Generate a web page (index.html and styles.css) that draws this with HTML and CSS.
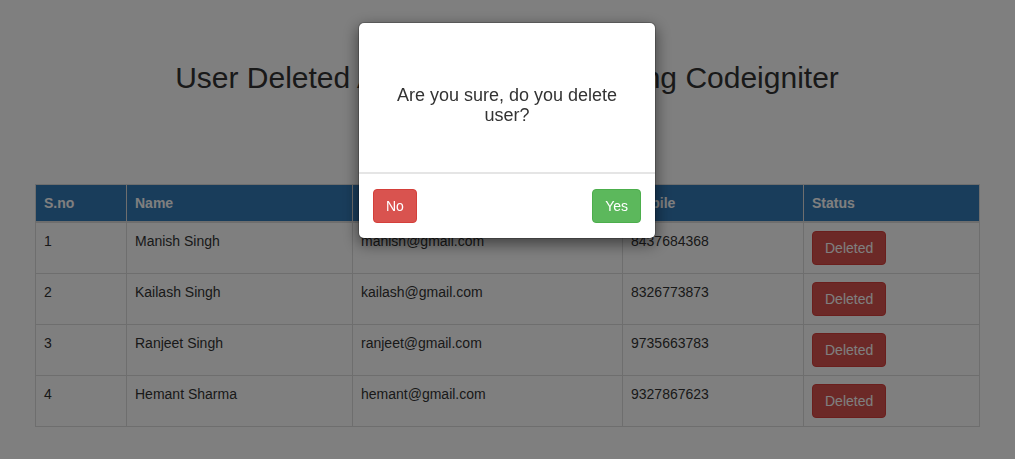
FILE: index.html
```html
<!DOCTYPE html>
<html lang="en">
<head>
<meta charset="utf-8">
<title>User Deleted Alert Confirmation using Codeigniter</title>
<link rel="stylesheet" href="styles.css">
</head>
<body>
<div class="page">
  <h2 class="title">User Deleted Alert Confirmation using Codeigniter</h2>
  <table class="users">
    <colgroup>
      <col class="c-sno">
      <col class="c-name">
      <col class="c-email">
      <col class="c-mobile">
      <col class="c-status">
    </colgroup>
    <thead>
      <tr><th>S.no</th><th>Name</th><th>Email</th><th>Mobile</th><th>Status</th></tr>
    </thead>
    <tbody>
      <tr><td>1</td><td>Manish Singh</td><td>manish@gmail.com</td><td>8437684368</td><td><button class="btn btn-danger">Deleted</button></td></tr>
      <tr><td>2</td><td>Kailash Singh</td><td>kailash@gmail.com</td><td>8326773873</td><td><button class="btn btn-danger">Deleted</button></td></tr>
      <tr><td>3</td><td>Ranjeet Singh</td><td>ranjeet@gmail.com</td><td>9735663783</td><td><button class="btn btn-danger">Deleted</button></td></tr>
      <tr><td>4</td><td>Hemant Sharma</td><td>hemant@gmail.com</td><td>9327867623</td><td><button class="btn btn-danger">Deleted</button></td></tr>
    </tbody>
  </table>
</div>

<div class="backdrop">
  <div class="modal">
    <div class="modal-body">
      <h4 class="question">Are you sure, do you delete user?</h4>
    </div>
    <div class="modal-footer">
      <button class="btn btn-danger">No</button>
      <button class="btn btn-success">Yes</button>
    </div>
  </div>
</div>
</body>
</html>
```

FILE: styles.css
```css
* { box-sizing: border-box; }

html, body {
  margin: 0;
  padding: 0;
  background: #fff;
}

body {
  font-family: "Liberation Sans", Arial, Helvetica, sans-serif;
  font-size: 14px;
  line-height: 1.42857143;
  color: #333;
  padding-right: 1px;
}

.page {
  width: 944px;
  margin: 0 auto;
}

.title {
  margin: 61px 0 0;
  font-size: 30px;
  font-weight: 500;
  line-height: 1.1;
  text-align: center;
  color: #333;
}

.users {
  width: 944px;
  margin-top: 90px;
  border-collapse: collapse;
  border-spacing: 0;
  table-layout: fixed;
  border: 1px solid #ddd;
}

.c-sno { width: 91px; }
.c-name { width: 226px; }
.c-email { width: 270px; }
.c-mobile { width: 181px; }
.c-status { width: 176px; }

.users th,
.users td {
  padding: 8px;
  text-align: left;
  vertical-align: top;
  border: 1px solid #ddd;
  line-height: 1.42857143;
}

.users thead th {
  background: #337ab7;
  color: #fff;
  font-weight: bold;
  border-bottom-width: 2px;
  vertical-align: bottom;
}

.btn {
  display: inline-block;
  padding: 6px 12px;
  font-family: inherit;
  font-size: 14px;
  line-height: 1.42857143;
  border: 1px solid transparent;
  border-radius: 4px;
  color: #fff;
  cursor: pointer;
  white-space: nowrap;
  margin: 0;
}

.btn-danger {
  background: #d9534f;
  border-color: #d43f3a;
}

.btn-success {
  background: #5cb85c;
  border-color: #4cae4c;
}

.backdrop {
  position: fixed;
  inset: 0;
  background: rgba(0, 0, 0, 0.5);
  display: flex;
  justify-content: center;
  align-items: flex-start;
  padding: 22px 1px 0 0;
}

.modal {
  width: 298px;
  flex: none;
  background: #fff;
  border: 1px solid rgba(0, 0, 0, 0.2);
  border-radius: 6px;
  box-shadow: 0 5px 15px rgba(0, 0, 0, 0.5);
  background-clip: padding-box;
}

.modal-body {
  padding: 63px 15px 46px;
}

.question {
  margin: 0;
  font-size: 18px;
  font-weight: 500;
  line-height: 1.1;
  text-align: center;
  color: #333;
}

.modal-footer {
  display: flex;
  justify-content: space-between;
  align-items: center;
  padding: 15px 14px 15px;
  border-top: 2px solid #e5e5e5;
}
```
